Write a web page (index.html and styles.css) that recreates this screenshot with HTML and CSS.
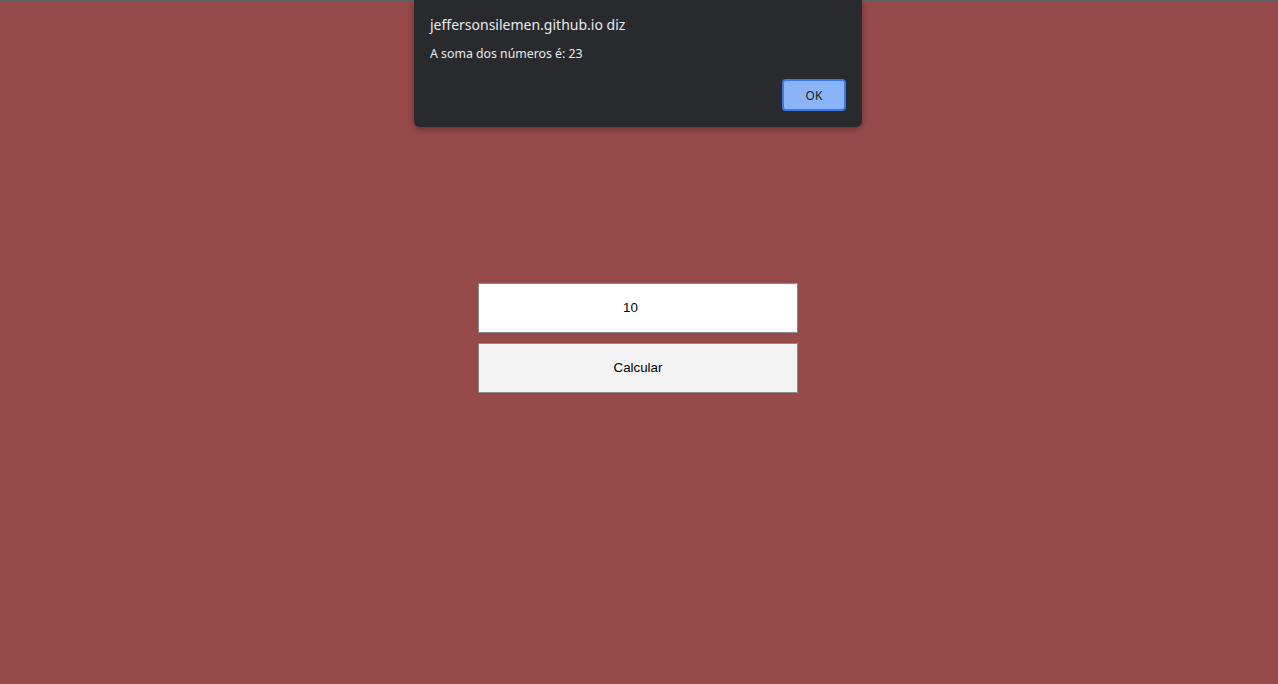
FILE: index.html
```html
<!DOCTYPE html>
<html lang="pt-BR">
<head>
<meta charset="utf-8">
<title>Soma</title>
<link rel="stylesheet" href="styles.css">
</head>
<body>
<div class="topline"></div>
<main class="page">
  <input class="field" type="number" value="10">
  <button class="calc" type="button">Calcular</button>
</main>
<div class="dialog" role="alertdialog">
  <div class="dialog-title">jeffersonsilemen.github.io diz</div>
  <div class="dialog-msg">A soma dos números é: 23</div>
  <div class="dialog-actions">
    <button class="ok" type="button">OK</button>
  </div>
</div>
</body>
</html>
```
FILE: styles.css
```css
html, body {
  margin: 0;
  padding: 0;
  height: 100%;
}
body {
  background: #974a4a;
  font-family: "Liberation Sans", Arial, sans-serif;
  overflow: hidden;
}
.topline {
  height: 1px;
  background: #5f6368;
}
.page {
  display: flex;
  flex-direction: column;
  align-items: center;
  gap: 10px;
  padding-top: 282px;
  padding-right: 2px;
}
.field {
  box-sizing: border-box;
  width: 320px;
  height: 50px;
  border: 1px solid #8a8a8a;
  background: #fff;
  font-family: "Liberation Sans", Arial, sans-serif;
  font-size: 13.333px;
  color: #000;
  text-align: center;
  padding: 0 2px 2px 2px;
  margin: 0;
  outline: none;
}
.calc {
  box-sizing: border-box;
  width: 320px;
  height: 50px;
  border: 1px solid #8a8a8a;
  background: #f3f3f3;
  font-family: "Liberation Sans", Arial, sans-serif;
  font-size: 13.333px;
  color: #000;
  margin: 0;
  padding: 0 0 2px 0;
}
.dialog {
  position: absolute;
  top: 0;
  left: 414px;
  width: 448px;
  height: 127px;
  box-sizing: border-box;
  background: #292a2d;
  border-radius: 0 0 6px 6px;
  box-shadow: 0 2px 6px rgba(0,0,0,0.35);
  padding: 16px 16px 0 16px;
  font-family: "Noto Sans", "Open Sans", sans-serif;
  color: #e8eaed;
  display: flex;
  flex-direction: column;
}
.dialog-title {
  font-size: 14px;
  line-height: 18px;
  margin-bottom: 12px;
}
.dialog-msg {
  font-size: 12.3px;
  line-height: 16px;
}
.dialog-actions {
  display: flex;
  justify-content: flex-end;
  margin-top: 17px;
}
.ok {
  box-sizing: border-box;
  width: 64px;
  height: 32px;
  background: #8ab4f8;
  border: 2px solid #3b78e7;
  border-radius: 4px;
  color: #202124;
  font-family: "Noto Sans", "Open Sans", sans-serif;
  font-size: 12px;
  padding: 0;
}
```
